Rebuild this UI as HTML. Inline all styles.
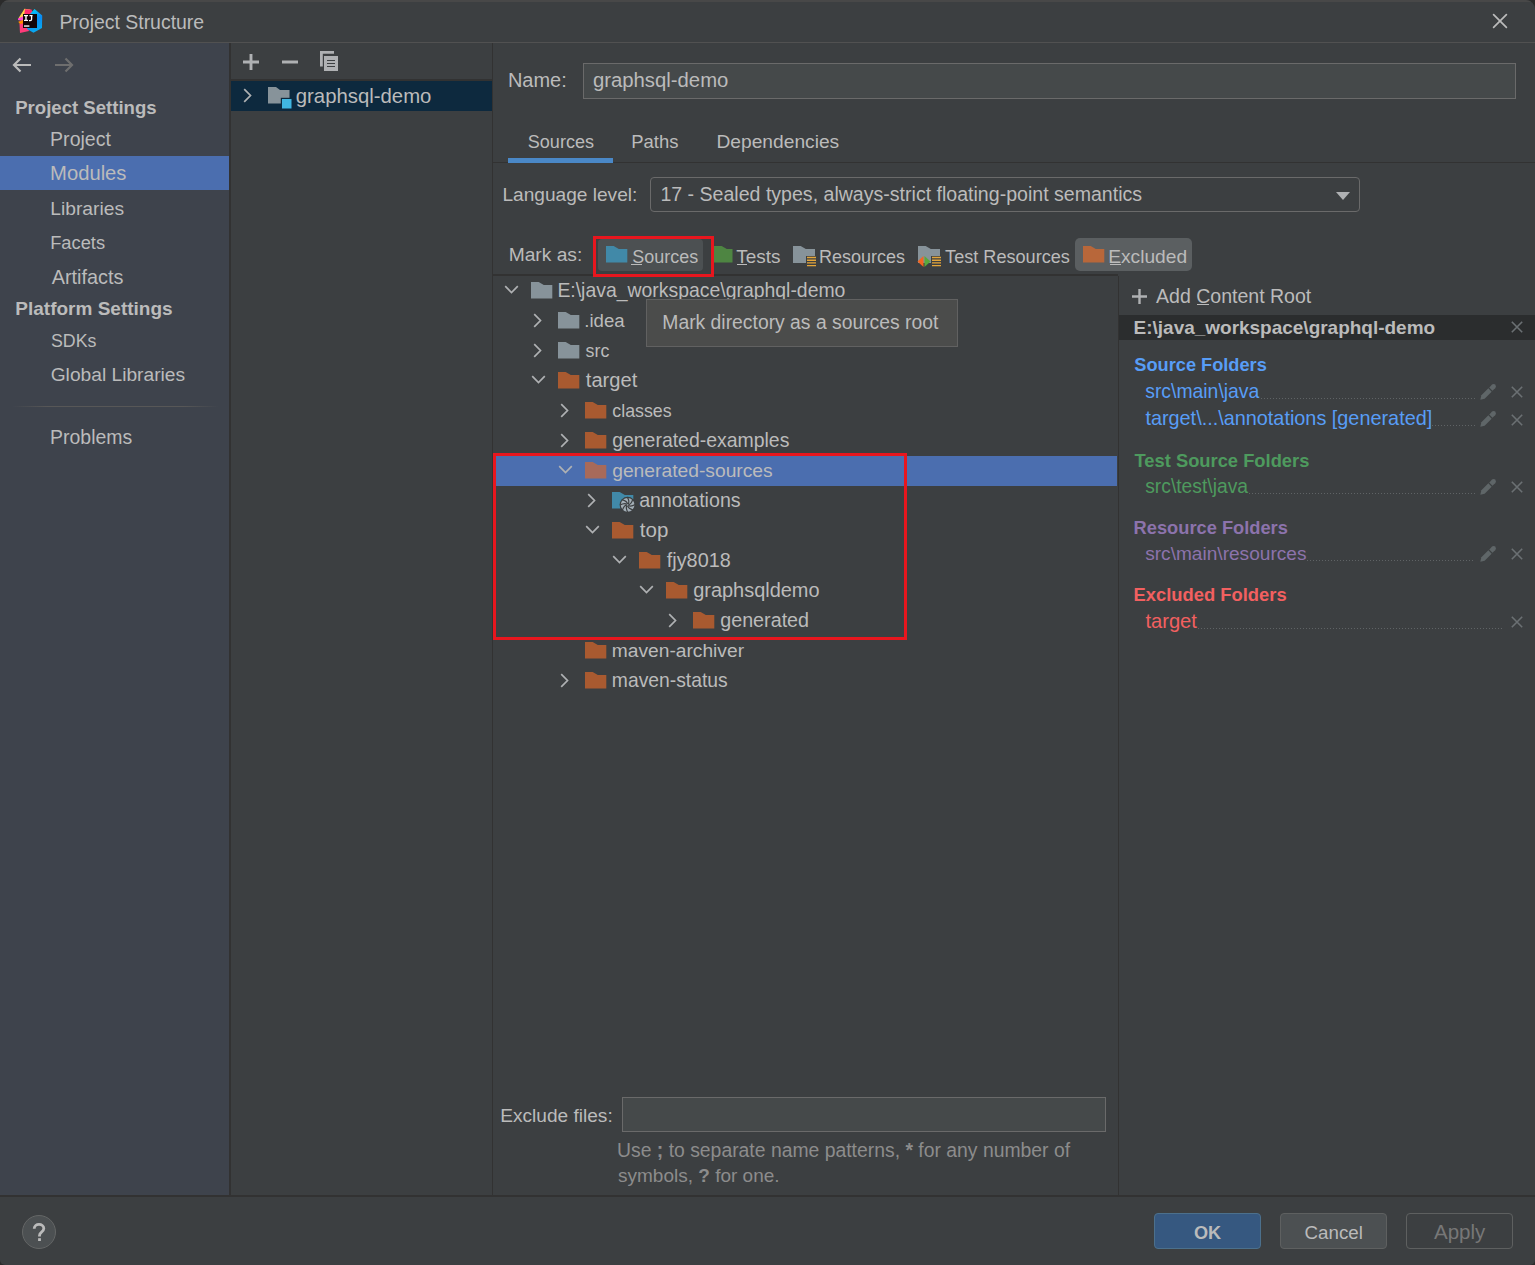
<!DOCTYPE html>
<html><head><meta charset="utf-8"><title>Project Structure</title>
<style>
html,body{margin:0;padding:0}
body{width:1535px;height:1265px;background:#2B2B2B;position:relative;overflow:hidden;font-family:"Liberation Sans",sans-serif}
.a{position:absolute;display:block}
.t{position:absolute;white-space:pre;line-height:24px;color:#BBBBBB}
</style></head><body>
<div class="a" style="left:0;top:0;width:1535px;height:1265px;background:#3C3F41;border-radius:9px 9px 5px 5px;overflow:hidden">
<div class="a" style="left:0px;top:0px;width:1535px;height:2px;background:#484848;"></div>
<svg class="a" style="left:14px;top:5px;" width="34" height="32" viewBox="0 0 34 32">
<defs><linearGradient id="lgb" x1="0" y1="0" x2="0.3" y2="1"><stop offset="0" stop-color="#00E0FF"/><stop offset="0.55" stop-color="#0A8CF5"/><stop offset="1" stop-color="#08A8F0"/></linearGradient>
<linearGradient id="lgl" x1="0" y1="0" x2="0" y2="1"><stop offset="0" stop-color="#FFD93D"/><stop offset="0.45" stop-color="#FF40C0"/><stop offset="0.6" stop-color="#FFD000"/><stop offset="0.75" stop-color="#FF7A1A"/><stop offset="1" stop-color="#FF2E7E"/></linearGradient></defs>
<polygon points="10.5,3.8 16.5,4.5 10,12 4.3,13.5" fill="#FFD24A"/>
<polygon points="11,4.2 17.5,4.5 19,9 10,11" fill="#FF2A6D"/>
<polygon points="4,13.5 10,11 9,16 4,15" fill="#FF45D0"/>
<polygon points="4.3,16.8 9.5,14.8 10,21 6.5,20" fill="#FF8A00"/>
<polygon points="5.5,19 12,18 15,26 6,28" fill="#FF3B7A"/>
<polygon points="20.5,4 28.2,10.5 28,23 19.5,27.8 13,24 16,9" fill="url(#lgb)"/>
<rect x="9" y="9" width="14" height="14" fill="#120608"/>
<rect x="10" y="10" width="4" height="1.2" fill="#fff"/><rect x="11.3" y="10" width="1.4" height="6" fill="#fff"/><rect x="10" y="14.8" width="4" height="1.2" fill="#fff"/>
<path d="M15.5 10.6 H18.6 M17.6 10.6 V14.3 Q17.6 15.6 16.2 15.6 H15" fill="none" stroke="#fff" stroke-width="1.3"/>
<rect x="10" y="20.3" width="5.4" height="1.5" fill="#E8E8E8"/>
</svg>
<div class="t" style="left:59.4px;top:10px;font-size:19.45px;">Project Structure</div>
<svg class="a" style="left:1491px;top:12px;" width="18" height="18" viewBox="0 0 18 18"><path d="M2.6 2.6 L15.4 15.4 M15.4 2.6 L2.6 15.4" stroke="#BBBBBB" stroke-width="1.7" stroke-linecap="round"/></svg>
<div class="a" style="left:0px;top:42px;width:1535px;height:1px;background:#515151;"></div>
<div class="a" style="left:0px;top:43px;width:229px;height:1152px;background:#3E434C;"></div>
<div class="a" style="left:229px;top:43px;width:2px;height:1152px;background:#323232;"></div>
<svg class="a" style="left:11px;top:56px;" width="24" height="18" viewBox="0 0 24 18"><path d="M3 9 H20 M9.5 2.5 L3 9 L9.5 15.5" fill="none" stroke="#BBBBBB" stroke-width="2.2"/></svg>
<svg class="a" style="left:51px;top:56px;" width="24" height="18" viewBox="0 0 24 18"><path d="M21 9 H4 M14.5 2.5 L21 9 L14.5 15.5" fill="none" stroke="#6E6E6E" stroke-width="2.2"/></svg>
<div class="t" style="left:15.2px;top:96px;font-size:18.59px;font-weight:700;">Project Settings</div>
<div class="a" style="left:0px;top:156px;width:229px;height:34px;background:#4B6EAF;"></div>
<div class="t" style="left:50.1px;top:127px;font-size:19.54px;">Project</div>
<div class="t" style="left:50.1px;top:161px;font-size:20.22px;">Modules</div>
<div class="t" style="left:50.2px;top:197px;font-size:19.25px;">Libraries</div>
<div class="t" style="left:50.2px;top:231px;font-size:18.3px;">Facets</div>
<div class="t" style="left:51.7px;top:265px;font-size:19.85px;">Artifacts</div>
<div class="t" style="left:15.3px;top:297px;font-size:19px;font-weight:700;">Platform Settings</div>
<div class="t" style="left:51.0px;top:329px;font-size:17.8px;">SDKs</div>
<div class="t" style="left:50.7px;top:363px;font-size:19.21px;">Global Libraries</div>
<div class="a" style="left:12px;top:406px;width:207px;height:1px;background:linear-gradient(to right,rgba(85,85,85,0),#575757 17%,#575757 83%,rgba(85,85,85,0));"></div>
<div class="t" style="left:50.1px;top:425px;font-size:19.47px;">Problems</div>
<svg class="a" style="left:242px;top:53px;" width="18" height="18" viewBox="0 0 18 18"><path d="M9 1 V17 M1 9 H17" stroke="#AFB1B3" stroke-width="2.9"/></svg>
<svg class="a" style="left:281px;top:53px;" width="18" height="18" viewBox="0 0 18 18"><path d="M1 9 H17" stroke="#AFB1B3" stroke-width="3"/></svg>
<svg class="a" style="left:319px;top:50px;" width="21" height="23" viewBox="0 0 21 23"><path d="M2.4 16.5 V2.4 H15" fill="none" stroke="#AFB1B3" stroke-width="2.8"/>
<rect x="5" y="6" width="14" height="15" fill="#AFB1B3"/>
<path d="M8 10.5 H16 M8 13.5 H16 M8 16.5 H16" stroke="#3C3F41" stroke-width="1.2"/></svg>
<div class="a" style="left:231px;top:79px;width:261px;height:2px;background:#323232;"></div>
<div class="a" style="left:231px;top:81px;width:261px;height:30px;background:#0D293E;"></div>
<svg class="a" style="left:242px;top:88px;" width="12" height="15" viewBox="0 0 12 15"><path d="M2.2 1.2 L8.5 7.5 L2.2 13.8" fill="none" stroke="#AFB1B3" stroke-width="1.7"/></svg>
<svg class="a" style="left:268px;top:86px;" width="24" height="23" viewBox="0 0 24 23"><path d="M0 1 H8 L12 4 H21.5 V12 H13 V17.5 H0 Z" fill="#87939A"/>
<rect x="12.8" y="11.8" width="11.5" height="11.5" fill="#0D293E"/><rect x="14" y="13" width="9.5" height="9.5" fill="#40B6E0"/></svg>
<div class="t" style="left:295.8px;top:84px;font-size:20.34px;">graphsql-demo</div>
<div class="a" style="left:492px;top:43px;width:1px;height:1152px;background:#323232;"></div>
<div class="t" style="left:507.9px;top:68px;font-size:19.98px;">Name:</div>
<div class="a" style="left:583px;top:63px;width:933px;height:36px;background:#45494A;border:1px solid #6A6A6A;box-sizing:border-box;"></div>
<div class="t" style="left:592.9px;top:68px;font-size:20.32px;">graphsql-demo</div>
<div class="t" style="left:527.8px;top:130px;font-size:18.06px;">Sources</div>
<div class="t" style="left:631.3px;top:130px;font-size:18.47px;">Paths</div>
<div class="t" style="left:716.5px;top:130px;font-size:19.21px;">Dependencies</div>
<div class="a" style="left:493px;top:162px;width:1042px;height:1px;background:#323232;"></div>
<div class="a" style="left:508px;top:158px;width:105px;height:5px;background:#4A88C7;"></div>
<div class="t" style="left:502.4px;top:183px;font-size:19.12px;">Language level:</div>
<div class="a" style="left:650px;top:177px;width:710px;height:35px;border:1px solid #6A6A6A;border-radius:4px;box-sizing:border-box;"></div>
<div class="t" style="left:660.4px;top:182px;font-size:19.57px;">17 - Sealed types, always-strict floating-point semantics</div>
<svg class="a" style="left:1335px;top:191px;" width="16" height="10" viewBox="0 0 16 10"><path d="M1 1 H15 L8 9 Z" fill="#AFB1B3"/></svg>
<div class="t" style="left:508.7px;top:243px;font-size:19.2px;">Mark as:</div>
<div class="a" style="left:598px;top:239px;width:105px;height:32px;background:#4C5052;border-radius:4px;"></div>
<svg class="a" style="left:606px;top:246px;" width="22" height="17" viewBox="0 0 22 17"><path d="M0 0 H7.7 L12.8 2.9 H21.3 V16.6 H0 Z" fill="#4189A8"/></svg>
<div class="t" style="left:632.3px;top:245px;font-size:17.95px;">Sources</div>
<div class="a" style="left:631px;top:264px;width:11px;height:1.3px;background:#BBBBBB;"></div>
<svg class="a" style="left:714px;top:246px;" width="22" height="17" viewBox="0 0 22 17"><path d="M0 0 H7.7 L12.8 2.9 H18.5 V16.6 H0 Z" fill="#4E8542"/></svg>
<div class="t" style="left:736.3px;top:245px;font-size:18.96px;">Tests</div>
<div class="a" style="left:737px;top:264px;width:10px;height:1.3px;background:#BBBBBB;"></div>
<svg class="a" style="left:793px;top:246px;" width="24" height="22" viewBox="0 0 24 22"><path d="M0 0 H7.7 L12.8 2.9 H22 V10 H13 V17 H0 Z" fill="#87939A"/>
<path d="M14 11.5 H23 M14 14.2 H23 M14 16.9 H23 M14 19.6 H23" stroke="#E3A53A" stroke-width="1.4"/></svg>
<div class="t" style="left:819.0px;top:245px;font-size:18.03px;">Resources</div>
<svg class="a" style="left:917px;top:246px;" width="26" height="22" viewBox="0 0 26 22"><path d="M1 0 H8.7 L13.8 2.9 H23 V10 H14 V17 H1 Z" fill="#87939A"/>
<path d="M6.5 10 L0.5 15.5 L6.5 21 Z" fill="#F26522"/>
<path d="M7.5 10 L13.5 15.5 L7.5 21 Z" fill="#59A83C"/>
<path d="M15 11.5 H24 M15 14.2 H24 M15 16.9 H24 M15 19.6 H24" stroke="#E3A53A" stroke-width="1.4"/></svg>
<div class="t" style="left:945.1px;top:245px;font-size:18.11px;">Test Resources</div>
<div class="a" style="left:1075px;top:238px;width:117px;height:33px;background:#5B5F61;border-radius:5px;"></div>
<svg class="a" style="left:1083px;top:246px;" width="22" height="17" viewBox="0 0 22 17"><path d="M0 0 H7.7 L12.8 2.9 H21.3 V16.6 H0 Z" fill="#B8673A"/></svg>
<div class="t" style="left:1108.2px;top:245px;font-size:19.18px;">Excluded</div>
<div class="a" style="left:1110px;top:264px;width:11px;height:1.3px;background:#BBBBBB;"></div>
<div class="a" style="left:493px;top:274px;width:625px;height:2px;background:#323232;"></div>
<div class="a" style="left:593px;top:236px;width:121px;height:41px;border:3px solid #E8161E;box-sizing:border-box;"></div>
<div class="a" style="left:493px;top:456px;width:624px;height:30px;background:#4B6EAF;"></div>
<svg class="a" style="left:504px;top:284px;" width="15" height="12" viewBox="0 0 15 12"><path d="M1.2 2.2 L7.5 8.5 L13.8 2.2" fill="none" stroke="#AFB1B3" stroke-width="1.7"/></svg>
<svg class="a" style="left:531.3px;top:282px;" width="22" height="17" viewBox="0 0 22 17"><path d="M0 0 H7.7 L12.8 2.9 H21.3 V16.6 H0 Z" fill="#87939A"/></svg>
<div class="t" style="left:557.4px;top:278px;font-size:19.42px;">E:\java_workspace\graphql-demo</div>
<svg class="a" style="left:531.5px;top:313px;" width="12" height="15" viewBox="0 0 12 15"><path d="M2.2 1.2 L8.5 7.5 L2.2 13.8" fill="none" stroke="#AFB1B3" stroke-width="1.7"/></svg>
<svg class="a" style="left:558.3px;top:312px;" width="22" height="17" viewBox="0 0 22 17"><path d="M0 0 H7.7 L12.8 2.9 H21.3 V16.6 H0 Z" fill="#87939A"/></svg>
<div class="t" style="left:584.3px;top:309px;font-size:18.63px;">.idea</div>
<svg class="a" style="left:531.5px;top:343px;" width="12" height="15" viewBox="0 0 12 15"><path d="M2.2 1.2 L8.5 7.5 L2.2 13.8" fill="none" stroke="#AFB1B3" stroke-width="1.7"/></svg>
<svg class="a" style="left:558.3px;top:342px;" width="22" height="17" viewBox="0 0 22 17"><path d="M0 0 H7.7 L12.8 2.9 H21.3 V16.6 H0 Z" fill="#87939A"/></svg>
<div class="t" style="left:585.6px;top:339px;font-size:17.8px;">src</div>
<svg class="a" style="left:531px;top:374px;" width="15" height="12" viewBox="0 0 15 12"><path d="M1.2 2.2 L7.5 8.5 L13.8 2.2" fill="none" stroke="#AFB1B3" stroke-width="1.7"/></svg>
<svg class="a" style="left:558.3px;top:372px;" width="22" height="17" viewBox="0 0 22 17"><path d="M0 0 H7.7 L12.8 2.9 H21.3 V16.6 H0 Z" fill="#A95A30"/></svg>
<div class="t" style="left:585.8px;top:368px;font-size:20.12px;">target</div>
<svg class="a" style="left:558.5px;top:403px;" width="12" height="15" viewBox="0 0 12 15"><path d="M2.2 1.2 L8.5 7.5 L2.2 13.8" fill="none" stroke="#AFB1B3" stroke-width="1.7"/></svg>
<svg class="a" style="left:585.3px;top:402px;" width="22" height="17" viewBox="0 0 22 17"><path d="M0 0 H7.7 L12.8 2.9 H21.3 V16.6 H0 Z" fill="#A95A30"/></svg>
<div class="t" style="left:612.3px;top:399px;font-size:17.8px;">classes</div>
<svg class="a" style="left:558.5px;top:433px;" width="12" height="15" viewBox="0 0 12 15"><path d="M2.2 1.2 L8.5 7.5 L2.2 13.8" fill="none" stroke="#AFB1B3" stroke-width="1.7"/></svg>
<svg class="a" style="left:585.3px;top:432px;" width="22" height="17" viewBox="0 0 22 17"><path d="M0 0 H7.7 L12.8 2.9 H21.3 V16.6 H0 Z" fill="#A95A30"/></svg>
<div class="t" style="left:612.2px;top:428px;font-size:19.44px;">generated-examples</div>
<svg class="a" style="left:558px;top:464px;" width="15" height="12" viewBox="0 0 15 12"><path d="M1.2 2.2 L7.5 8.5 L13.8 2.2" fill="none" stroke="#AFB1B3" stroke-width="1.7"/></svg>
<svg class="a" style="left:585.3px;top:462px;" width="22" height="17" viewBox="0 0 22 17"><path d="M0 0 H7.7 L12.8 2.9 H21.3 V16.6 H0 Z" fill="#A86A5A"/></svg>
<div class="t" style="left:612.2px;top:459px;font-size:19.25px;">generated-sources</div>
<svg class="a" style="left:585.5px;top:493px;" width="12" height="15" viewBox="0 0 12 15"><path d="M2.2 1.2 L8.5 7.5 L2.2 13.8" fill="none" stroke="#AFB1B3" stroke-width="1.7"/></svg>
<svg class="a" style="left:612.3px;top:492px;" width="24" height="22" viewBox="0 0 24 22"><path d="M0 0 H7.7 L12.8 2.9 H21.3 V16.6 H0 Z" fill="#4189A8"/>
<circle cx="15.6" cy="12.8" r="8" fill="#3C3F41"/>
<g transform="translate(15.6 12.8)"><circle r="6.9" fill="#A3AEB6"/><path d="M0.6 0 Q3.8 -0.4 5.2 -5.6" fill="none" stroke="#3C3F41" stroke-width="1.2" transform="rotate(0)"/><path d="M0.6 0 Q3.8 -0.4 5.2 -5.6" fill="none" stroke="#3C3F41" stroke-width="1.2" transform="rotate(45)"/><path d="M0.6 0 Q3.8 -0.4 5.2 -5.6" fill="none" stroke="#3C3F41" stroke-width="1.2" transform="rotate(90)"/><path d="M0.6 0 Q3.8 -0.4 5.2 -5.6" fill="none" stroke="#3C3F41" stroke-width="1.2" transform="rotate(135)"/><path d="M0.6 0 Q3.8 -0.4 5.2 -5.6" fill="none" stroke="#3C3F41" stroke-width="1.2" transform="rotate(180)"/><path d="M0.6 0 Q3.8 -0.4 5.2 -5.6" fill="none" stroke="#3C3F41" stroke-width="1.2" transform="rotate(225)"/><path d="M0.6 0 Q3.8 -0.4 5.2 -5.6" fill="none" stroke="#3C3F41" stroke-width="1.2" transform="rotate(270)"/><path d="M0.6 0 Q3.8 -0.4 5.2 -5.6" fill="none" stroke="#3C3F41" stroke-width="1.2" transform="rotate(315)"/><circle r="0.9" fill="#8A959C"/></g></svg>
<div class="t" style="left:639.2px;top:488px;font-size:19.62px;">annotations</div>
<svg class="a" style="left:585px;top:524px;" width="15" height="12" viewBox="0 0 15 12"><path d="M1.2 2.2 L7.5 8.5 L13.8 2.2" fill="none" stroke="#AFB1B3" stroke-width="1.7"/></svg>
<svg class="a" style="left:612.3px;top:522px;" width="22" height="17" viewBox="0 0 22 17"><path d="M0 0 H7.7 L12.8 2.9 H21.3 V16.6 H0 Z" fill="#A95A30"/></svg>
<div class="t" style="left:639.8px;top:518px;font-size:20.5px;">top</div>
<svg class="a" style="left:612px;top:554px;" width="15" height="12" viewBox="0 0 15 12"><path d="M1.2 2.2 L7.5 8.5 L13.8 2.2" fill="none" stroke="#AFB1B3" stroke-width="1.7"/></svg>
<svg class="a" style="left:639.3px;top:552px;" width="22" height="17" viewBox="0 0 22 17"><path d="M0 0 H7.7 L12.8 2.9 H21.3 V16.6 H0 Z" fill="#A95A30"/></svg>
<div class="t" style="left:666.8px;top:548px;font-size:19.82px;">fjy8018</div>
<svg class="a" style="left:639px;top:584px;" width="15" height="12" viewBox="0 0 15 12"><path d="M1.2 2.2 L7.5 8.5 L13.8 2.2" fill="none" stroke="#AFB1B3" stroke-width="1.7"/></svg>
<svg class="a" style="left:666.3px;top:582px;" width="22" height="17" viewBox="0 0 22 17"><path d="M0 0 H7.7 L12.8 2.9 H21.3 V16.6 H0 Z" fill="#A95A30"/></svg>
<div class="t" style="left:693.2px;top:578px;font-size:19.95px;">graphsqldemo</div>
<svg class="a" style="left:666.5px;top:613px;" width="12" height="15" viewBox="0 0 12 15"><path d="M2.2 1.2 L8.5 7.5 L2.2 13.8" fill="none" stroke="#AFB1B3" stroke-width="1.7"/></svg>
<svg class="a" style="left:693.3px;top:612px;" width="22" height="17" viewBox="0 0 22 17"><path d="M0 0 H7.7 L12.8 2.9 H21.3 V16.6 H0 Z" fill="#A95A30"/></svg>
<div class="t" style="left:720.2px;top:608px;font-size:19.74px;">generated</div>
<svg class="a" style="left:585.3px;top:642px;" width="22" height="17" viewBox="0 0 22 17"><path d="M0 0 H7.7 L12.8 2.9 H21.3 V16.6 H0 Z" fill="#A95A30"/></svg>
<div class="t" style="left:611.8px;top:639px;font-size:19.21px;">maven-archiver</div>
<svg class="a" style="left:558.5px;top:673px;" width="12" height="15" viewBox="0 0 12 15"><path d="M2.2 1.2 L8.5 7.5 L2.2 13.8" fill="none" stroke="#AFB1B3" stroke-width="1.7"/></svg>
<svg class="a" style="left:585.3px;top:672px;" width="22" height="17" viewBox="0 0 22 17"><path d="M0 0 H7.7 L12.8 2.9 H21.3 V16.6 H0 Z" fill="#A95A30"/></svg>
<div class="t" style="left:611.8px;top:669px;font-size:19.32px;">maven-status</div>
<div class="a" style="left:493px;top:453px;width:414px;height:187px;border:3px solid #E8161E;box-sizing:border-box;"></div>
<div class="a" style="left:646px;top:299px;width:312px;height:48px;background:#4B4C4B;border:1px solid #616161;box-sizing:border-box;"></div>
<div class="t" style="left:662.3px;top:311px;font-size:19.33px;">Mark directory as a sources root</div>
<div class="a" style="left:1118px;top:276px;width:1px;height:919px;background:#323232;"></div>
<svg class="a" style="left:1131px;top:288px;" width="18" height="17" viewBox="0 0 18 17"><path d="M8.5 1 V16 M1 8.5 H16" stroke="#AFB1B3" stroke-width="2.4"/></svg>
<div class="t" style="left:1156.0px;top:284px;font-size:19.54px;">Add Content Root</div>
<div class="a" style="left:1197px;top:304px;width:12px;height:1.3px;background:#BBBBBB;"></div>
<div class="a" style="left:1119px;top:315px;width:416px;height:25px;background:#2B2D2E;"></div>
<div class="t" style="left:1133.6px;top:316px;font-size:18.98px;font-weight:700;">E:\java_workspace\graphql-demo</div>
<svg class="a" style="left:1510px;top:320px;" width="14" height="14" viewBox="0 0 14 14"><path d="M1.8 1.8 L12.2 12.2 M12.2 1.8 L1.8 12.2" stroke="#6B7073" stroke-width="1.6"/></svg>
<div class="t" style="left:1134.3px;top:353px;font-size:18.22px;color:#589DF6;font-weight:700;">Source Folders</div>
<div class="t" style="left:1145.2px;top:379px;font-size:19.39px;color:#589DF6;">src\main\java</div>
<div class="a" style="left:1261px;top:398px;width:214px;height:1px;background-image:linear-gradient(to right,#5F6365 50%,transparent 50%);background-size:3px 1px"></div>
<svg class="a" style="left:1479px;top:382.5px;" width="18" height="18" viewBox="0 0 18 18"><path d="M1.3 16.7 L2.37 12.37 L9.37 5.37 L12.63 8.63 L5.63 15.63 Z" fill="#5F6668"/><path d="M11.9 6.1 L14.6 3.4" stroke="#5F6668" stroke-width="4.6" stroke-linejoin="round"/><circle cx="14.6" cy="3.4" r="2.3" fill="#5F6668"/></svg>
<svg class="a" style="left:1510px;top:385px;" width="14" height="14" viewBox="0 0 14 14"><path d="M1.8 1.8 L12.2 12.2 M12.2 1.8 L1.8 12.2" stroke="#6B7073" stroke-width="1.6"/></svg>
<div class="t" style="left:1145.4px;top:406px;font-size:19.85px;color:#589DF6;">target\...\annotations [generated]</div>
<div class="a" style="left:1432px;top:425px;width:43px;height:1px;background-image:linear-gradient(to right,#5F6365 50%,transparent 50%);background-size:3px 1px"></div>
<svg class="a" style="left:1479px;top:410.0px;" width="18" height="18" viewBox="0 0 18 18"><path d="M1.3 16.7 L2.37 12.37 L9.37 5.37 L12.63 8.63 L5.63 15.63 Z" fill="#5F6668"/><path d="M11.9 6.1 L14.6 3.4" stroke="#5F6668" stroke-width="4.6" stroke-linejoin="round"/><circle cx="14.6" cy="3.4" r="2.3" fill="#5F6668"/></svg>
<svg class="a" style="left:1510px;top:412.5px;" width="14" height="14" viewBox="0 0 14 14"><path d="M1.8 1.8 L12.2 12.2 M12.2 1.8 L1.8 12.2" stroke="#6B7073" stroke-width="1.6"/></svg>
<div class="t" style="left:1134.5px;top:449px;font-size:18.33px;color:#4E9A5E;font-weight:700;">Test Source Folders</div>
<div class="t" style="left:1145.2px;top:475px;font-size:19.29px;color:#4E9A5E;">src\test\java</div>
<div class="a" style="left:1249px;top:493px;width:226px;height:1px;background-image:linear-gradient(to right,#5F6365 50%,transparent 50%);background-size:3px 1px"></div>
<svg class="a" style="left:1479px;top:477.9px;" width="18" height="18" viewBox="0 0 18 18"><path d="M1.3 16.7 L2.37 12.37 L9.37 5.37 L12.63 8.63 L5.63 15.63 Z" fill="#5F6668"/><path d="M11.9 6.1 L14.6 3.4" stroke="#5F6668" stroke-width="4.6" stroke-linejoin="round"/><circle cx="14.6" cy="3.4" r="2.3" fill="#5F6668"/></svg>
<svg class="a" style="left:1510px;top:480.4px;" width="14" height="14" viewBox="0 0 14 14"><path d="M1.8 1.8 L12.2 12.2 M12.2 1.8 L1.8 12.2" stroke="#6B7073" stroke-width="1.6"/></svg>
<div class="t" style="left:1133.6px;top:516px;font-size:18.28px;color:#8C73AC;font-weight:700;">Resource Folders</div>
<div class="t" style="left:1145.2px;top:542px;font-size:19.1px;color:#8C73AC;">src\main\resources</div>
<div class="a" style="left:1307px;top:560px;width:168px;height:1px;background-image:linear-gradient(to right,#5F6365 50%,transparent 50%);background-size:3px 1px"></div>
<svg class="a" style="left:1479px;top:544.9px;" width="18" height="18" viewBox="0 0 18 18"><path d="M1.3 16.7 L2.37 12.37 L9.37 5.37 L12.63 8.63 L5.63 15.63 Z" fill="#5F6668"/><path d="M11.9 6.1 L14.6 3.4" stroke="#5F6668" stroke-width="4.6" stroke-linejoin="round"/><circle cx="14.6" cy="3.4" r="2.3" fill="#5F6668"/></svg>
<svg class="a" style="left:1510px;top:547.4px;" width="14" height="14" viewBox="0 0 14 14"><path d="M1.8 1.8 L12.2 12.2 M12.2 1.8 L1.8 12.2" stroke="#6B7073" stroke-width="1.6"/></svg>
<div class="t" style="left:1133.6px;top:583px;font-size:18.36px;color:#F26060;font-weight:700;">Excluded Folders</div>
<div class="t" style="left:1145.4px;top:609px;font-size:20.16px;color:#F26060;">target</div>
<div class="a" style="left:1198px;top:628px;width:304px;height:1px;background-image:linear-gradient(to right,#5F6365 50%,transparent 50%);background-size:3px 1px"></div>
<svg class="a" style="left:1510px;top:615.2px;" width="14" height="14" viewBox="0 0 14 14"><path d="M1.8 1.8 L12.2 12.2 M12.2 1.8 L1.8 12.2" stroke="#6B7073" stroke-width="1.6"/></svg>
<div class="t" style="left:500.2px;top:1104px;font-size:19.1px;">Exclude files:</div>
<div class="a" style="left:622px;top:1097px;width:484px;height:35px;background:#45494A;border:1px solid #6A6A6A;box-sizing:border-box;"></div>
<div class="t" style="left:617.0px;top:1138px;font-size:19.38px;color:#8C8C8C;">Use <b>;</b> to separate name patterns, <b>*</b> for any number of</div>
<div class="t" style="left:618.0px;top:1164px;font-size:19px;color:#8C8C8C;">symbols, <b>?</b> for one.</div>
<div class="a" style="left:0px;top:1195px;width:1535px;height:2px;background:#323232;"></div>
<div class="a" style="left:22px;top:1215px;width:34px;height:34px;border-radius:50%;background:#4C5052;border:1px solid #646666;box-sizing:border-box"></div>
<svg class="a" style="left:30px;top:1221px;" width="18" height="22" viewBox="0 0 18 22"><path d="M4.2 7.8 C4.2 4.8 6.5 3.4 9 3.4 C11.5 3.4 13.8 4.9 13.8 7.5 C13.8 9.4 12.4 10.5 11.3 11.3 C10.2 12.1 9.5 13 9.5 14.6 V15.6" fill="none" stroke="#BBBBBB" stroke-width="2.8"/><rect x="8.1" y="17.2" width="2.8" height="2.8" fill="#BBBBBB"/></svg>
<div class="a" style="left:1154px;top:1213px;width:107px;height:36px;background:#365880;border:1px solid #4C708C;border-radius:4px;box-sizing:border-box;"></div>
<div class="t" style="left:1193.9px;top:1221px;font-size:18.11px;font-weight:700;">OK</div>
<div class="a" style="left:1280px;top:1213px;width:107px;height:36px;background:#4C5052;border:1px solid #5E6060;border-radius:4px;box-sizing:border-box;"></div>
<div class="t" style="left:1304.6px;top:1221px;font-size:18.73px;">Cancel</div>
<div class="a" style="left:1406px;top:1213px;width:107px;height:36px;border:1px solid #5E6060;border-radius:4px;box-sizing:border-box;"></div>
<div class="t" style="left:1434.0px;top:1220px;font-size:20.5px;color:#777777;">Apply</div>
</div>
</body></html>
